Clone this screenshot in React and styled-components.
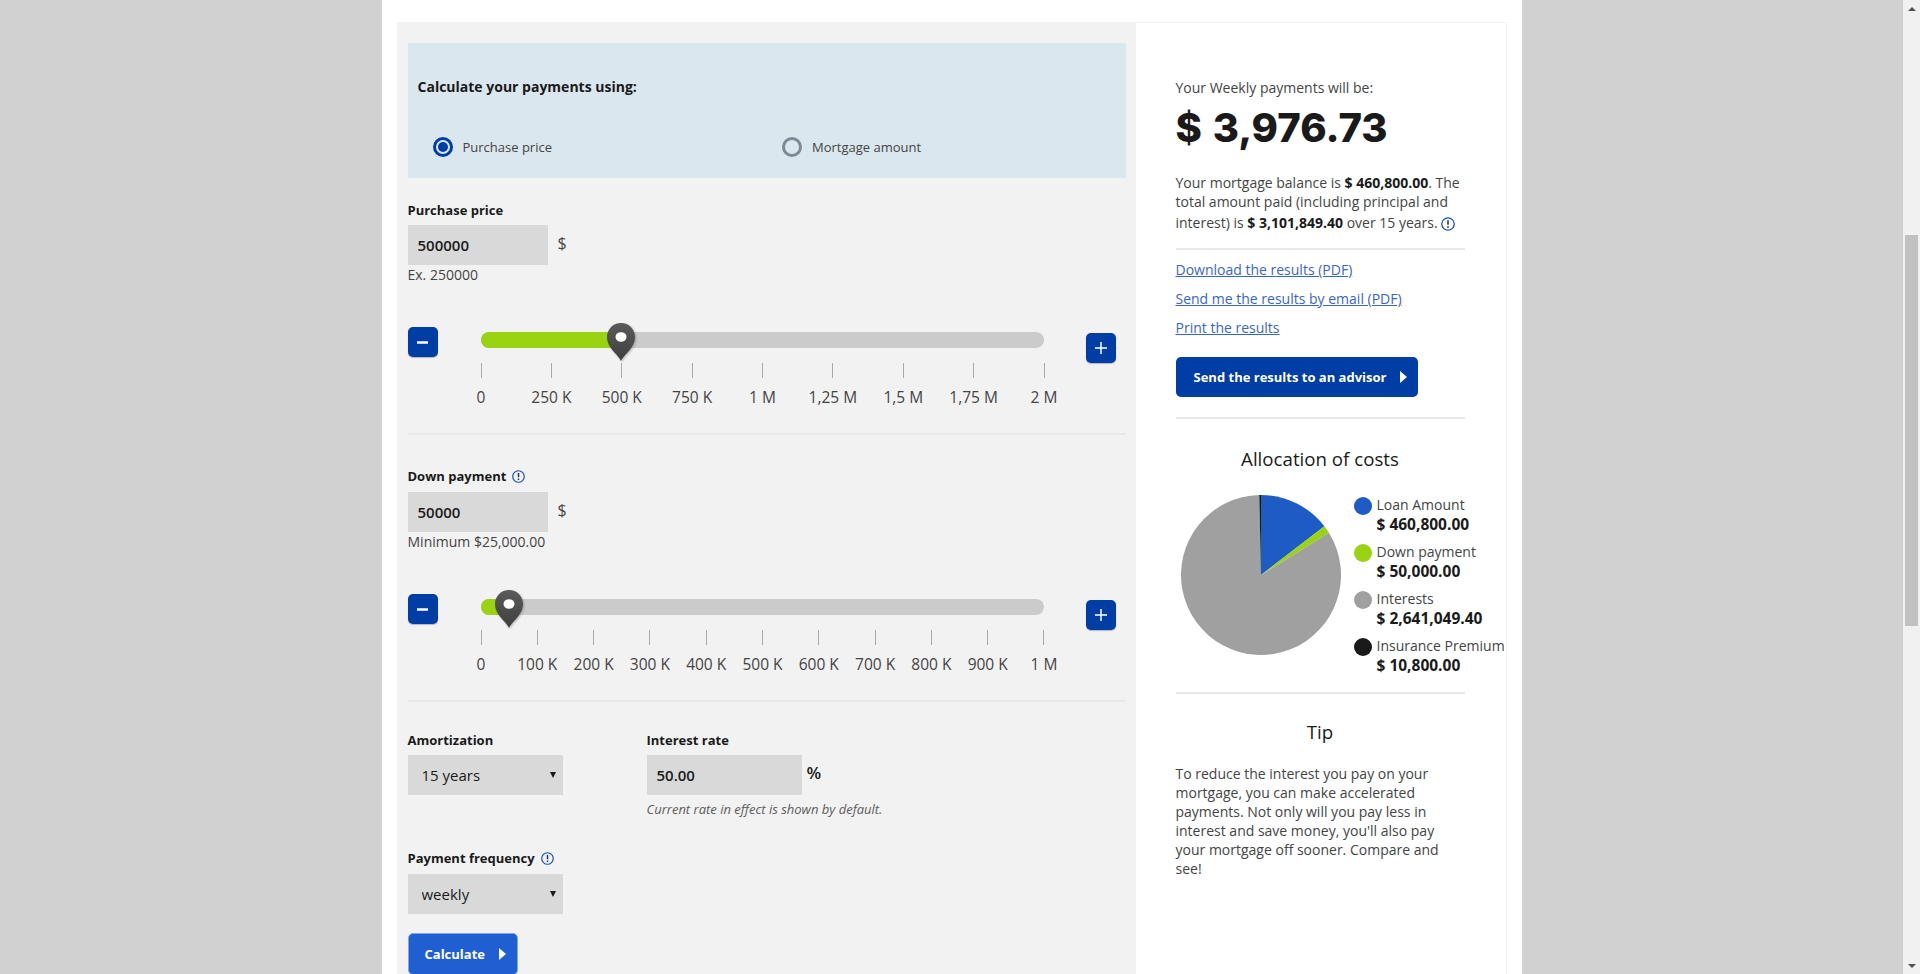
import React from 'react';
import styled, { createGlobalStyle } from 'styled-components';

const GlobalStyle = createGlobalStyle`
  html, body {
    margin: 0;
    height: 100%;
    overflow: hidden;
  }
  body {
    font-family: 'Open Sans', 'Liberation Sans', sans-serif;
    font-size: 14px;
    color: #333;
  }
  * {
    box-sizing: border-box;
  }
`;

const Page = styled.div`
  display: flex;
  height: 974px;
  overflow: hidden;
  background: #d1d1d1;
`;
const Viewport = styled.div`
  flex: 1;
  display: flex;
  justify-content: center;
`;
const Sheet = styled.main`
  width: 1140px;
  height: 974px;
  padding: 22px 15px 0 15px;
  background: #fff;
  display: flex;
  align-items: flex-start;
  overflow: hidden;
`;

const Scrollbar = styled.div`
  width: 17px;
  background: #f1f1f1;
  display: flex;
  flex-direction: column;
  align-items: center;
`;
const ScrollArrow = styled.div`
  height: 17px;
  width: 100%;
  display: flex;
  align-items: center;
  justify-content: center;
  &::before {
    content: '';
    border-left: 4px solid transparent;
    border-right: 4px solid transparent;
    ${p => (p.$down ? 'border-top: 4px solid #505050;' : 'border-bottom: 4px solid #505050;')}
  }
`;
const ScrollTrack = styled.div`
  flex: 1;
  width: 100%;
  padding: 218px 2px 0;
`;
const ScrollThumb = styled.div`
  height: 391px;
  background: #c1c1c1;
`;

const FormPanel = styled.section`
  width: 738px;
  height: 1100px;
  flex: none;
  padding: 21px 9px 0 11px;
  background: #f2f2f2;
`;
const UsingBox = styled.div`
  height: 135px;
  padding-top: 34px;
  background: #dae7ee;
`;
const UsingTitle = styled.div`
  padding-left: 10px;
  font-size: 14px;
  font-weight: 700;
  line-height: 20px;
  color: #1a1a1a;
`;
const RadioRow = styled.div`
  display: grid;
  grid-template-columns: 349.5px 1fr;
  margin-top: 40px;
  padding-left: 25px;
`;
const RadioOption = styled.label`
  display: flex;
  align-items: center;
  gap: 10px;
  font-size: 13px;
  line-height: 20px;
  color: #444;
`;
const RadioMark = styled.span`
  width: 20px;
  height: 20px;
  border-radius: 50%;
  border: 3px solid ${p => (p.$on ? '#003da5' : '#7d8a94')};
  display: flex;
  align-items: center;
  justify-content: center;
  &::after {
    content: '';
    width: 10px;
    height: 10px;
    border-radius: 50%;
    background: ${p => (p.$on ? '#003da5' : 'transparent')};
  }
`;

const Field = styled.div`
  margin-top: ${p => p.$top}px;
`;
const Label = styled.div`
  display: flex;
  align-items: center;
  gap: 6px;
  height: 17px;
  margin-bottom: ${p => (p.$info ? 7 : 6)}px;
  font-size: 13px;
  font-weight: 700;
  line-height: 17px;
  color: #1a1a1a;
  white-space: nowrap;
`;
const InputRow = styled.div`
  display: flex;
  align-items: center;
  gap: ${p => p.$gap || 10}px;
`;
const TextInput = styled.input`
  width: ${p => p.$width}px;
  height: 40px;
  padding: 0 10px;
  border: 0;
  border-radius: 0;
  background: #d9d9d9;
  font-family: inherit;
  font-size: 15px;
  font-weight: 600;
  color: #1a1a1a;
`;
const Unit = styled.span`
  font-size: ${p => (p.$bold ? 17 : 16)}px;
  line-height: 20px;
  margin-top: -5px;
  font-weight: ${p => (p.$bold ? 600 : 400)};
  color: ${p => (p.$bold ? '#1a1a1a' : '#444')};
`;
const Hint = styled.div`
  margin-top: 1px;
  font-size: 14px;
  line-height: 18px;
  color: #444;
`;
const ItalicHint = styled.div`
  margin-top: 5px;
  font-size: 13px;
  font-style: italic;
  line-height: 18px;
  color: #5c5c5c;
`;

const SliderRow = styled.div`
  display: flex;
  align-items: flex-start;
  margin-top: 43px;
`;
const StepButton = styled.button`
  flex: none;
  width: 30px;
  height: 30px;
  margin-top: ${p => p.$top || 0}px;
  margin-left: ${p => p.$left || 0}px;
  padding: 0;
  border: 0;
  border-radius: 5px;
  background: #003da5;
  box-shadow: 0 1px 1px rgba(0, 0, 0, 0.25);
  display: flex;
  align-items: center;
  justify-content: center;
`;
const SliderBody = styled.div`
  width: 564px;
  margin-left: 43px;
  padding-top: 5px;
`;
const Track = styled.div`
  position: relative;
  width: 563px;
  height: 16px;
  border-radius: 8px;
  background: #cbcbcb;
`;
const TrackFill = styled.div`
  height: 100%;
  border-radius: 8px 0 0 8px;
  background: #9ad311;
`;
const Thumb = styled.svg`
  position: absolute;
  top: -9px;
  width: 28px;
  height: 38px;
  margin-left: -14px;
  filter: drop-shadow(1px 1px 1px rgba(0, 0, 0, 0.25));
`;
const Ticks = styled.div`
  display: flex;
  justify-content: space-between;
  margin-top: 15px;
`;
const Tick = styled.div`
  width: 1px;
  display: flex;
  flex-direction: column;
  align-items: center;
  &::before {
    content: '';
    width: 1px;
    height: 15px;
    background: #aaa;
  }
`;
const TickLabel = styled.span`
  margin-top: 8px;
  font-size: 15.5px;
  line-height: 22px;
  color: #444;
  white-space: nowrap;
`;
const Rule = styled.hr`
  height: 2px;
  margin: ${p => p.$top}px 0 0;
  border: 0;
  background: #e8e8e8;
`;

const RateGrid = styled.div`
  display: grid;
  grid-template-columns: 239px 1fr;
  margin-top: 30px;
`;
const SelectWrap = styled.div`
  position: relative;
  width: 155px;
  height: 40px;
  &::after {
    content: '';
    position: absolute;
    right: 7px;
    top: 17px;
    border-left: 3px solid transparent;
    border-right: 3px solid transparent;
    border-top: 6px solid #1a1a1a;
    pointer-events: none;
  }
`;
const Select = styled.select`
  appearance: none;
  width: 100%;
  height: 100%;
  padding: 0 14px;
  border: 0;
  border-radius: 0;
  background: #d9d9d9;
  font-family: inherit;
  font-size: 15px;
  color: #1a1a1a;
`;
const CalcButton = styled.button`
  display: flex;
  align-items: center;
  gap: 14px;
  width: 110px;
  height: 42px;
  margin-top: 19px;
  padding: 0 0 0 16px;
  border: 1px solid #7fa6ee;
  border-radius: 5px;
  background: #1f5fd1;
  color: #fff;
  font-family: inherit;
  font-size: 13px;
  font-weight: 700;
`;
const Caret = styled.span`
  flex: none;
  border-top: 6.5px solid transparent;
  border-bottom: 6.5px solid transparent;
  border-left: 7px solid #fff;
`;

const ResultPanel = styled.aside`
  width: 372px;
  height: 1100px;
  flex: none;
  padding: 55px 41px 0 40px;
  border: 1px solid #f1f1f1;
  background: #fff;
`;
const Lead = styled.div`
  font-size: 14px;
  line-height: 20px;
  color: #444;
`;
const Amount = styled.div`
  margin-top: 6px;
  font-family: Inter, 'Liberation Sans', sans-serif;
  font-size: 40px;
  font-weight: 800;
  line-height: 48px;
  word-spacing: 2px;
  color: #1a1a1a;
  white-space: nowrap;
`;
const Summary = styled.p`
  margin: 21px 0 0;
  font-size: 14px;
  line-height: 19px;
  color: #444;
  b {
    color: #1a1a1a;
    font-weight: 700;
  }
  svg {
    margin: 5.7px 0 0 3px;
    vertical-align: -3px;
  }
`;
const Links = styled.div`
  display: flex;
  flex-direction: column;
  align-items: flex-start;
  gap: 9px;
  margin-top: 10px;
`;
const Link = styled.a`
  font-size: 14px;
  line-height: 20px;
  color: #3a65c8;
  text-decoration: underline;
`;
const AdvisorButton = styled.button`
  display: flex;
  align-items: center;
  gap: 14px;
  width: 242px;
  height: 40px;
  margin-top: 19px;
  padding: 0 0 0 18px;
  border: 0;
  border-radius: 5px;
  background: #003da5;
  color: #fff;
  font-family: inherit;
  font-size: 13px;
  font-weight: 700;
  white-space: nowrap;
`;
const SectionTitle = styled.h3`
  margin: ${p => p.$top}px 0 0;
  font-size: 18.7px;
  font-weight: 400;
  line-height: 24px;
  text-align: center;
  color: #1a1a1a;
`;
const ChartRow = styled.div`
  display: flex;
  align-items: flex-start;
  height: 188px;
  margin-top: 24px;
  padding-left: 5px;
`;
const Pie = styled.svg`
  flex: none;
  width: 160px;
  height: 160px;
`;
const Legend = styled.ul`
  flex: none;
  list-style: none;
  margin: 0 0 0 13px;
  padding: 0;
`;
const LegendItem = styled.li`
  display: grid;
  grid-template-columns: 18px auto;
  grid-template-rows: 19px 21px;
  column-gap: 5px;
  height: 47px;
  white-space: nowrap;
`;
const LegendDot = styled.span`
  width: 18px;
  height: 18px;
  margin-top: 2px;
  border-radius: 50%;
  background: ${p => p.$color};
`;
const LegendName = styled.span`
  font-size: 14px;
  line-height: 19px;
  color: #444;
`;
const LegendValue = styled.span`
  grid-column: 2;
  font-size: 15.5px;
  font-weight: 700;
  line-height: 21px;
  color: #1a1a1a;
`;
const TipText = styled.p`
  width: 275px;
  margin: 20px 0 0;
  font-size: 14px;
  line-height: 19px;
  color: #444;
`;

const InfoIcon = ({ size = 13 }) => (
  <svg width={size} height={size} viewBox="0 0 14 14" fill="none">
    <circle cx="7" cy="7" r="6.2" stroke="#1f4fb8" strokeWidth="1.3" />
    <path d="M7 3.2v4.6" stroke="#1a3478" strokeWidth="1.6" />
    <path d="M7 9.2v1.6" stroke="#1a3478" strokeWidth="1.6" />
  </svg>
);

const PinThumb = ({ left }) => (
  <Thumb viewBox="0 0 28 38" style={{ left }}>
    <defs>
      <linearGradient id="pin" x1="0" y1="0" x2="0" y2="1">
        <stop offset="0" stopColor="#5a5a5a" />
        <stop offset="1" stopColor="#3f3f3f" />
      </linearGradient>
    </defs>
    <path
      d="M14 0C6.2 0 0 6.2 0 14c0 4 1.4 7.200 3.500 10.500C6.500 29.200 12 33.500 14 38c2-4.500 7.500-8.800 10.500-13.500C26.600 21.200 28 18 28 14 28 6.200 21.800 0 14 0z"
      fill="url(#pin)"
    />
    <ellipse cx="14" cy="14" rx="5.500" ry="4.800" fill="#fff" />
  </Thumb>
);

const Slider = ({ value, max, marks }) => {
  const pct = (value / max) * 100;
  return (
    <SliderRow>
      <StepButton aria-label="minus">
        <svg width="11" height="3" viewBox="0 0 11 3"><path d="M0 1.500h11" stroke="#fff" strokeWidth="2.500" /></svg>
      </StepButton>
      <SliderBody>
        <Track>
          <TrackFill style={{ width: `${pct}%` }} />
          <PinThumb left={`${pct}%`} />
        </Track>
        <Ticks>
          {marks.map(m => (
            <Tick key={m}>
              <TickLabel>{m}</TickLabel>
            </Tick>
          ))}
        </Ticks>
      </SliderBody>
      <StepButton $top={6} $left={41} aria-label="plus">
        <svg width="12" height="12" viewBox="0 0 12 12">
          <path d="M0 6h12M6 0v12" stroke="#fff" strokeWidth="1.500" />
        </svg>
      </StepButton>
    </SliderRow>
  );
};

const costs = [
  { name: 'Loan Amount', text: '$ 460,800.00', value: 460800, color: '#1f5bc4' },
  { name: 'Down payment', text: '$ 50,000.00', value: 50000, color: '#9ad311' },
  { name: 'Interests', text: '$ 2,641,049.40', value: 2641049.4, color: '#a0a0a0' },
  { name: 'Insurance Premium', text: '$ 10,800.00', value: 10800, color: '#1a1a1a' },
];

const slicePath = (start, end) => {
  const point = a => [80 + 80 * Math.sin(a), 80 - 80 * Math.cos(a)];
  const [x1, y1] = point(start);
  const [x2, y2] = point(end);
  return `M80 80L${x1} ${y1}A80 80 0 ${end - start > Math.PI ? 1 : 0} 1 ${x2} ${y2}Z`;
};

const CostPie = () => {
  const total = costs.reduce((sum, c) => sum + c.value, 0);
  let angle = 0;
  return (
    <Pie viewBox="0 0 160 160">
      {costs.map(c => {
        const start = angle;
        angle += (c.value / total) * Math.PI * 2;
        return <path key={c.name} d={slicePath(start, angle)} fill={c.color} />;
      })}
    </Pie>
  );
};

const App = () => {
  return (
    <Page>
      <GlobalStyle />
      <Viewport>
        <Sheet>
          <FormPanel>
            <UsingBox>
              <UsingTitle>Calculate your payments using:</UsingTitle>
              <RadioRow>
                <RadioOption><RadioMark $on />Purchase price</RadioOption>
                <RadioOption><RadioMark />Mortgage amount</RadioOption>
              </RadioRow>
            </UsingBox>

            <Field $top={24}>
              <Label>Purchase price</Label>
              <InputRow>
                <TextInput $width={140} defaultValue="500000" />
                <Unit>$</Unit>
              </InputRow>
              <Hint>Ex. 250000</Hint>
            </Field>
            <Slider
              value={500000}
              max={2000000}
              marks={['0', '250 K', '500 K', '750 K', '1 M', '1,25 M', '1,5 M', '1,75 M', '2 M']}
            />
            <Rule $top={25} />

            <Field $top={33}>
              <Label $info>Down payment <InfoIcon /></Label>
              <InputRow>
                <TextInput $width={140} defaultValue="50000" />
                <Unit>$</Unit>
              </InputRow>
              <Hint>Minimum $25,000.00</Hint>
            </Field>
            <Slider
              value={50000}
              max={1000000}
              marks={['0', '100 K', '200 K', '300 K', '400 K', '500 K', '600 K', '700 K', '800 K', '900 K', '1 M']}
            />
            <Rule $top={25} />

            <RateGrid>
              <div>
                <Label>Amortization</Label>
                <SelectWrap>
                  <Select defaultValue="15">
                    <option value="15">15 years</option>
                    <option value="20">20 years</option>
                    <option value="25">25 years</option>
                  </Select>
                </SelectWrap>
              </div>
              <div>
                <Label>Interest rate</Label>
                <InputRow $gap={5}>
                  <TextInput $width={155} defaultValue="50.00" />
                  <Unit $bold>%</Unit>
                </InputRow>
                <ItalicHint>Current rate in effect is shown by default.</ItalicHint>
              </div>
            </RateGrid>

            <Field $top={32}>
              <Label $info>Payment frequency <InfoIcon /></Label>
              <SelectWrap>
                <Select defaultValue="weekly">
                  <option value="weekly">weekly</option>
                  <option value="monthly">monthly</option>
                </Select>
              </SelectWrap>
            </Field>
            <CalcButton>Calculate <Caret /></CalcButton>
          </FormPanel>

          <ResultPanel>
            <Lead>Your Weekly payments will be:</Lead>
            <Amount>$ 3,976.73</Amount>
            <Summary>
              Your mortgage balance is <b>$ 460,800.00</b>. The total amount paid (including principal and interest) is{' '}
              <b>$ 3,101,849.40</b> over 15 years.<InfoIcon size={14} />
            </Summary>
            <Rule $top={16} />
            <Links>
              <Link href="#">Download the results (PDF)</Link>
              <Link href="#">Send me the results by email (PDF)</Link>
              <Link href="#">Print the results</Link>
            </Links>
            <AdvisorButton>Send the results to an advisor <Caret /></AdvisorButton>
            <Rule $top={20} />
            <SectionTitle $top={28}>Allocation of costs</SectionTitle>
            <ChartRow>
              <CostPie />
              <Legend>
                {costs.map(c => (
                  <LegendItem key={c.name}>
                    <LegendDot $color={c.color} />
                    <LegendName>{c.name}</LegendName>
                    <LegendValue>{c.text}</LegendValue>
                  </LegendItem>
                ))}
              </Legend>
            </ChartRow>
            <Rule $top={9} />
            <SectionTitle $top={26}>Tip</SectionTitle>
            <TipText>
              To reduce the interest you pay on your mortgage, you can make accelerated payments. Not only will you pay
              less in interest and save money, you'll also pay your mortgage off sooner. Compare and see!
            </TipText>
          </ResultPanel>
        </Sheet>
      </Viewport>
      <Scrollbar>
        <ScrollArrow />
        <ScrollTrack><ScrollThumb /></ScrollTrack>
        <ScrollArrow $down />
      </Scrollbar>
    </Page>
  );
};

export default App;
